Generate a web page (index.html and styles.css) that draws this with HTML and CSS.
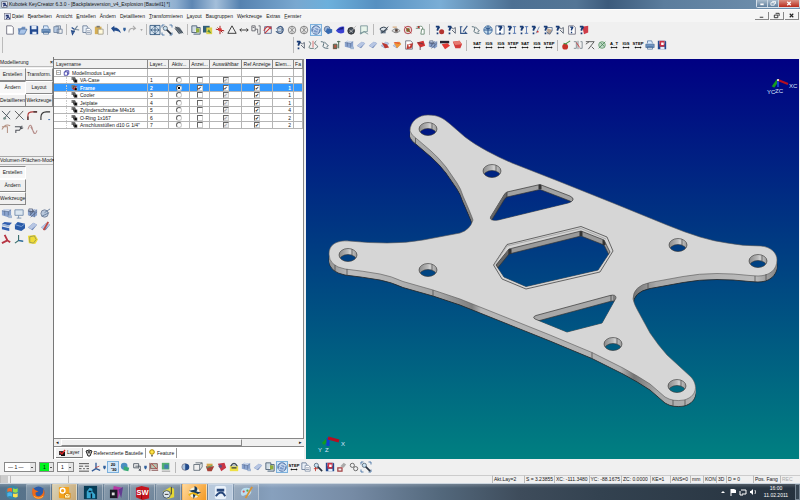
FILE: index.html
```html
<!DOCTYPE html>
<html lang="de">
<head>
<meta charset="utf-8">
<meta name="viewport" content="width=device-width, initial-scale=1">
<title>Kubotek KeyCreator 6.3.0</title>
<link rel="stylesheet" href="styles.css">
</head>
<body>
<header class="titlebar">
  <svg class="app-icon" viewBox="0 0 12 12"><rect x="1" y="1" width="10" height="10" rx="1" fill="#e8edf5" stroke="#445"/><path d="M3 3h5v3H3z" fill="#23346e"/><path d="M4 9l3-3 3 3" stroke="#23346e" fill="none" stroke-width="2"/></svg>
  <h1>Kubotek KeyCreator 6.3.0 - [Backplateversion_v4_Explosion [Bauteil1] *]</h1>
  <div class="window-buttons">
    <button aria-label="Minimieren"><svg viewBox="0 0 12 8"><path d="M4 5h4" stroke="#fff" stroke-width="2"/></svg></button>
    <button aria-label="Wiederherstellen"><svg viewBox="0 0 12 8"><path d="M5 1.500h4v3M3.500 3h4v3h-4z" stroke="#fff" fill="none"/></svg></button>
    <button class="close" aria-label="Schließen"><svg viewBox="0 0 12 8"><path d="M4 2l4 4M8 2l-4 4" stroke="#fff" stroke-width="1.500"/></svg></button>
  </div>
</header>

<nav class="menubar">
  <svg class="app-icon" viewBox="0 0 12 12"><rect x="1" y="1" width="10" height="10" fill="#dfe3f4" stroke="#667"/><path d="M3 3h5v3H3z" fill="#23346e"/><path d="M4 10l3-4 3 4" stroke="#23346e" fill="none" stroke-width="2"/></svg>
  <button><u>D</u>atei</button><button><u>B</u>earbeiten</button><button><u>A</u>nsicht</button><button><u>E</u>rstellen</button><button><u>Ä</u>ndern</button><button><u>D</u>etaillieren</button><button><u>T</u>ransformieren</button><button><u>L</u>ayout</button><button>Baugruppen</button><button><u>W</u>erkzeuge</button><button>E<u>x</u>tras</button><button><u>F</u>enster</button>
  <div class="mdi-buttons">
    <button aria-label="Fenster minimieren"><svg viewBox="0 0 12 8"><path d="M4 6h4" stroke="#222"/></svg></button>
    <button aria-label="Fenster wiederherstellen"><svg viewBox="0 0 12 8"><path d="M5 1.500h4v3M3.500 3.500h4v3h-4z" stroke="#222" fill="none"/></svg></button>
    <button aria-label="Fenster schließen"><svg viewBox="0 0 12 8"><path d="M4 2l4 4M8 2l-4 4" stroke="#222" stroke-width="1.300"/></svg></button>
  </div>
</nav>

<div class="toolbar main-tools" role="toolbar" data-icons="new open save printer printall | cut copy paste | undo drop redo dropgrey | fit zoomwin hatch | screen picture spark triangle width props nocircle rotate wheel wheel *shade sphere half darkball sheet || maskeye maskeye2 redeye redo2 || askdot askpath askangle squiggle globe askbox asklen asklen askline askpart askpath askpage askred"></div>
<div class="toolbar second-tools">
  <div class="toolbar empty-tools"></div>
  <div class="toolbar" role="toolbar" data-icons="askpath curves squiggle lamp cubes slab slab redslab goldslab redpage redblock gearcube redtop redbox || SAT IGS IGS STEP SAT IGS STEP | tomato mirror seven greenball A_T IGS STEP printer redsave"></div>
</div>

<main class="workspace">
  <aside class="palettes">
    <section class="palette first">
      <h2>Modellierung <button aria-label="Modellierung schließen">×</button></h2>
      <div class="palette-tabs"><button>Erstellen</button><button>Transform.</button><button class="active">Ändern</button><button>Layout</button><button>Detaillieren</button><button>Werkzeuge</button></div>
      <div class="palette-icons" data-icons="trimx trimx2 fillet fillet2 spline spline2 spline3"></div>
    </section>
    <section class="palette">
      <h2>Volumen-/Flächen-Mod<button aria-label="Volumen schließen">×</button></h2>
      <div class="palette-tabs"><button class="active">Erstellen</button><button class="row-two">Ändern</button><button class="row-two">Werkzeuge</button></div>
      <div class="palette-icons" data-icons="cubes monitor gearcube ballcube bluetop bluecube slab redpen redaxis axis yellowcube"></div>
    </section>
  </aside>

  <section class="layers">
    <div class="table-area">
      <table>
        <colgroup><col class="c-name"><col class="c-num"><col class="c-num"><col class="c-show"><col class="c-sel"><col class="c-ref"><col class="c-num"><col></colgroup>
        <thead><tr><th>Layername</th><th>Layer...</th><th>Aktiv...</th><th>Anzei...</th><th>Auswählbar</th><th>Ref Anzeige</th><th>Elem...</th><th>Fa</th></tr></thead>
        <tbody id="layer-rows">
          <tr class="root"><td><span class="expander">−</span><svg class="root-icon" viewBox="0 0 8 8"><path d="M1 2.500h4.500V7H1zM2.500 2.500V1H7v4.500H5.500" fill="none" stroke="#22229a"/></svg>Modellmodus Layer</td><td></td><td></td><td></td><td></td><td></td><td></td><td></td></tr>
        </tbody>
      </table>
    </div>
    <div class="hscroll"><button aria-label="Nach links">◂</button><span class="thumb"></span><button aria-label="Nach rechts">▸</button></div>
    <div class="layer-tabs">
      <button class="active"><svg viewBox="0 0 8 8"><path d="M1 2h4v4H1z" fill="#333"/><path d="M3 3h4v4H3z" fill="#111"/><path d="M2 3l2 2 3-4" stroke="#d22" fill="none" stroke-width="1.300"/></svg>Layer</button>
      <button><svg viewBox="0 0 8 8"><path d="M1 2q3-2 6 0L5 7H3z" fill="#ddd" stroke="#222"/><circle cx="4" cy="3" r="1.500" fill="#555"/></svg>Referenzierte Bauteile</button>
      <button><svg viewBox="0 0 8 8"><circle cx="4" cy="3" r="2.300" fill="#ffe34a" stroke="#a80"/><path d="M3 6h2v1.500H3z" fill="#777"/></svg>Feature</button>
    </div>
  </section>

  <section class="viewport">
    <svg viewBox="306 59 493 400" role="img" aria-label="Backplate">
      <defs>
        <linearGradient id="sky" gradientUnits="userSpaceOnUse" x1="0" y1="59" x2="0" y2="459"><stop offset="0" stop-color="#000083"/><stop offset="1" stop-color="#008081"/></linearGradient>
        <linearGradient id="wall" x1="0" x2="1" y1="0" y2="0"><stop offset="0" stop-color="#8a8a8a"/><stop offset=".5" stop-color="#bcbcbc"/><stop offset=".6" stop-color="#d0d0d0"/><stop offset="1" stop-color="#999"/></linearGradient>
        <linearGradient id="side" gradientUnits="userSpaceOnUse" x1="328" x2="778" y1="0" y2="0"><stop offset="0" stop-color="#929292"/><stop offset=".05" stop-color="#bdbdbd"/><stop offset=".17" stop-color="#b0b0b0"/><stop offset=".25" stop-color="#a4a4a4"/><stop offset=".32" stop-color="#808080"/><stop offset=".34" stop-color="#b6b6b6"/><stop offset=".65" stop-color="#b2b2b2"/><stop offset=".68" stop-color="#757575"/><stop offset=".73" stop-color="#a9a9a9"/><stop offset=".95" stop-color="#bcbcbc"/><stop offset="1" stop-color="#828282"/></linearGradient>
        <path id="body" d="M410 131C410 121 419 115 428 115C438 115 443 118 450 124L465 137Q474 144 487 151Q500 158 512 163L558 181L613 203L667 225Q684 232 700 237Q713 241 727 243Q742 246 761 246C771 247 777 253 777 260C777 270 769 276 758 276L750 275.500Q733 273.500 717 273.500Q699 273.500 683 276.500L650 282.500Q633 286 633 299Q634 304 638 311L650 333Q658 345 667 355L691 377C699 386 696 397 684 400Q673 402 665 397L650 384Q638 376 623 368L592 352.500L550 335L460 299L433 290L403 281.500Q391 276 380 274Q363 271 345 269Q329 266 329 254C329 245 336 240 349 241Q369 243 387 243Q407 243 423 240L460 233Q470 230 473 220Q471 214 463 196Q461 189 457 183L446 167Q439 158 431 151L417 139Q411 135 410 131Z"/>
        <path id="upper" d="M507 192L540 184.500L570 196Q574 198 573 200Q572 202 568 203L498 220Q489 221 490.500 217L504 195Q505 193 507 192Z"/>
        <path id="lower" d="M536 315.500L610 295.500Q616 294 616 298L602 323L567 332L535 319Q532 317 536 315.500Z"/>
        <path id="rim" d="M507 244.500L581 226.500L607 237L613 251L600 272L526 289L502 279L493.500 265Z"/>
        <path id="octagon" d="M509 249L581 231L604 240L610 252L598 270L526 286.500L504 277L496 265Z"/>
        <ellipse id="hole" rx="9" ry="6.500"/>
        <clipPath id="hole-clip"><use href="#hole"/></clipPath>
        <clipPath id="upper-clip"><use href="#upper"/></clipPath>
        <clipPath id="lower-clip"><use href="#lower"/></clipPath>
        <clipPath id="octagon-clip"><use href="#octagon"/></clipPath>
      </defs>
      <rect x="306" y="59" width="493" height="400" fill="url(#sky)"/>
      <g fill="url(#side)">
        <use href="#body" y="6" stroke="#222" stroke-width=".8"/>
        <use href="#body" y="5"/><use href="#body" y="4"/><use href="#body" y="3"/><use href="#body" y="2"/><use href="#body" y="1"/>
      </g>
      <use href="#body" fill="#d6d6d6" stroke="#555" stroke-width=".6"/>
      <path d="M415.500 138v6M335 265v6M347 269v6M433 290v6M592 352.500v6M648 283v6M755 276v6M766 274v6M673 400v6M685 400v6" stroke="#444" stroke-width=".7"/>
      <g stroke="#333" stroke-width=".7">
        <use href="#upper" fill="#a2a2a2"/><g clip-path="url(#upper-clip)"><path d="M488 218L507 190V200L492 222Z" fill="#666"/><use href="#upper" y="5" fill="url(#sky)"/><path d="M540 184v5" stroke-width="3"/></g>
        <use href="#lower" fill="#a8a8a8"/><g clip-path="url(#lower-clip)"><use href="#lower" y="6" fill="url(#sky)"/><path d="M611 295v6M614 296v5"/></g>
        <use href="#rim" fill="#d4d4d4"/><path d="M494 265L507 246L581 228.500L606 239" stroke="#999" fill="none"/><use href="#octagon" fill="#9a9a9a"/><g clip-path="url(#octagon-clip)"><path d="M496 265L509 248V255L499 269Z" fill="#666"/><use href="#octagon" y="5" fill="url(#sky)"/><path d="M510 249v5M581 231v5M604 240v5" stroke-width="3"/></g>
      </g>
      <g id="holes"></g>
      <g class="triad"><path d="M328 439l-5 5" stroke="#139b20" stroke-width="3"/><path d="M328 438v8" stroke="#123bd5" stroke-width="3"/><path d="M328 438l11 3" stroke="#b50f20" stroke-width="3"/><text x="341" y="446">X</text><text x="318" y="452">Y</text><text x="325" y="452">Z</text></g>
      <g class="triad"><path d="M778 80l-5 7" stroke="#139b20" stroke-width="3"/><path d="M778 80v7" stroke="#123bd5" stroke-width="2"/><path d="M778 80l10 4" stroke="#b50f20" stroke-width="2"/><circle cx="778" cy="80" r="1" fill="#fff"/><text x="789" y="88">XC</text><text x="767" y="94">YC</text><text x="775" y="93">ZC</text></g>
    </svg>
  </section>
</main>

<div class="toolbar bottom-tools" role="toolbar">
  <select class="pick line-pick" aria-label="Linienart"><option>— 1 —</option></select>
  <select class="pick color-pick" aria-label="Farbe"><option>1</option></select>
  <select class="pick" aria-label="Linienbreite"><option>1</option></select>
  <div class="toolbar" data-icons="lines axis2 drop *toggle greenglobe lamp2 drop redscreen greenpic || bluehalf box basket redball toolbox cubes slab screen *shade STEP copy zoomred redsave eraser rings zoomwin"></div>
</div>

<footer class="statusbar">
  <span class="s-tick"></span><span class="s-tick2"></span><span class="s-message"></span><span class="s-layer">Akt.Lay=2</span><span class="s-coord">S = 3.23855</span><span class="s-coord">XC: -111.3480</span><span class="s-coord">YC: -88.1675</span><span class="s-coord">ZC: 0.0000</span><span class="s-mid">KE=1</span><span class="s-mid">ANS=0</span><span class="s-unit">mm</span><span class="s-unit">KON</span><span class="s-dim">3D</span><span class="s-depth">D = 0</span><span class="s-depth">Pos. Fang</span><span class="s-mid off">REC</span>
</footer>

<div class="taskbar">
  <button class="start" aria-label="Start"><svg viewBox="0 0 16 16"><circle cx="8" cy="8" r="7.500" fill="#3b86a5"/><path d="M2.500 4q3-2 5-.5v4q-2-1.500-5 0z" fill="#f36b2b"/><path d="M8.500 3.500q3 1.500 5 0v4q-2 1.500-5 0z" fill="#9bdf45"/><path d="M2.500 8.500q3-1.500 5 0v4q-2-1.500-5 0z" fill="#49b4ed"/><path d="M8.500 9q3 1 5-.5v4q-2 1.500-5 0z" fill="#ffe04d"/></svg></button>
  <button aria-label="Firefox"><svg viewBox="0 0 16 16"><circle cx="8" cy="8" r="6.500" fill="#2b5ba8"/><path d="M2 3Q0 9 3 13Q8 17 13 13Q16 8 13 4Q14 10 9 12Q4 12 5 8L8 7Q4 6 2 3Z" fill="#ee6a18"/><path d="M3 12q5 4 10 0" stroke="#ffc248" fill="none"/></svg></button>
  <button class="mail" aria-label="Outlook"><svg viewBox="0 0 16 16"><rect x="2" y="2" width="11" height="12" rx="1" fill="#f2a21e"/><circle cx="6" cy="6" r="2.500" stroke="#fff" stroke-width="1.500" fill="none"/><path d="M8 9h6v5H8z" fill="#fff2bd" stroke="#d98b12"/><path d="M8 9l3 3 3-3" stroke="#d98b12" fill="none"/></svg></button>
  <button aria-label="Bildbetrachter"><svg viewBox="0 0 16 16"><rect x="1" y="1" width="14" height="14" fill="#063c56"/><path d="M4 14V7l3-4 3 1v3l3 3v4z" fill="#38a7d0"/><path d="M6 7h3M9 9v5" stroke="#041b30" stroke-width="1.500"/></svg></button>
  <button aria-label="Medien"><svg viewBox="0 0 16 16"><path d="M5 1l9 2-5 12-5-7z" fill="#b637a3"/><path d="M10 5l5-3-2 12z" fill="#613c91"/><rect x="1" y="5" width="8" height="9" fill="#1b1b24"/><path d="M3 8h3v3H3z" fill="#ddd"/></svg></button>
  <button aria-label="SolidWorks"><svg viewBox="0 0 16 16"><path d="M1 3l6-2 8 2v11l-7 2-7-3z" fill="#c5151f"/><path d="M7 5v10" stroke="#7c0710"/><text class="badge" x="8" y="11">SW</text></svg></button>
  <button class="running" aria-label="Rechner"><svg viewBox="0 0 16 16"><path d="M2 7l8-5 4 2v9l-7 2z" fill="#e6d834"/><circle cx="6" cy="10" r="4" fill="#dfe7ec" stroke="#456"/><path d="M4 10h4M11 2v8" stroke="#333"/></svg></button>
  <button class="alert" aria-label="Nachricht"><svg viewBox="0 0 16 16"><circle cx="8" cy="8" r="5.500" fill="#f4f0dd"/><path d="M8 1q5 2 2 6l5 1-6 3-2 4-1-7-4-2 6-1z" fill="#183c5c"/><path d="M2 11q4-5 11 1" stroke="#e9b516" stroke-width="2" fill="none"/></svg></button>
  <button class="running current" aria-label="KeyCreator"><svg viewBox="0 0 16 16"><rect x="2" y="1" width="12" height="14" rx="2" fill="#e9f1fa"/><path d="M4 4h8v3H4z" fill="#27477b"/><path d="M3 12q6-8 10 0" fill="none" stroke="#27477b" stroke-width="2"/></svg></button>
  <button class="running" aria-label="Paint"><svg viewBox="0 0 16 16"><path d="M2 8Q2 3 8 3Q14 3 13 8Q11 12 8 12Q9 9 6 11Q2 13 2 8Z" fill="#b9ddf0"/><circle cx="5" cy="7" r="1.200" fill="#df514b"/><circle cx="9" cy="6" r="1.200" fill="#55a84a"/><path d="M14 2L7 14" stroke="#d79335" stroke-width="2"/></svg></button>
  <div class="tray">
    <svg viewBox="0 0 8 8"><path d="M2 5l2-2 2 2z" fill="#fff"/></svg>
    <svg viewBox="0 0 8 8"><path d="M2 1v7" stroke="#fff"/><path d="M2 1h3l2 1v3H2z" fill="#fff"/></svg>
    <svg viewBox="0 0 8 8"><path d="M2 2h5v4H3M1 3v4h3" fill="none" stroke="#fff"/></svg>
    <svg viewBox="0 0 8 8"><path d="M1 3h1l2-2v6L2 5H1z" fill="#fff"/><path d="M6 2q1 2 0 4" stroke="#ddd" fill="none"/></svg>
    <div class="clock"><time>16:00</time><span>11.02.2011</span></div>
    <button class="desktop" aria-label="Desktop anzeigen"></button>
  </div>
</div>
<script src="script.js"></script>
</body>
</html>
```
FILE: styles.css
```css
* { box-sizing: border-box; }
body {
  margin: 0;
  min-height: 100vh;
  display: flex;
  flex-direction: column;
  background: #f0f0f0;
  color: #161616;
  font: 5px/7px "Liberation Sans", Arial, sans-serif;
}
button { margin: 0; padding: 0; border: 0; background: none; color: inherit; font: inherit; }
h1, h2 { margin: 0; font: inherit; }
svg { display: block; flex: none; }

.titlebar {
  display: flex;
  align-items: center;
  height: 9px;
  padding-left: 1px;
  background: linear-gradient(90deg, #b9c7d6 0, #c3d0df 18%, #8fafd0 22%, #5d86b3 24%, #a4bfda 27%, #5682b0 30%, #79a8d0 37%, #6cb0dc 41%, #5790c1 47%, #7aaed6 55%, #4d7093 64%, #547696 72%, #3c5b7c 76%, #5b7d9d 83%, #7393b0 100%);
}
.app-icon { width: 7px; height: 7px; }
.titlebar h1 { margin-left: 1px; flex: 1; white-space: nowrap; }
.window-buttons { display: flex; align-self: flex-start; width: 44px; height: 8px; border: 1px solid #d5e0ea; border-top: 0; border-radius: 0 0 2px 2px; }
.window-buttons button { flex: 1; background: linear-gradient(#a9bccd, #607f9d); border-right: 1px solid #c9d6e1; }
.window-buttons .close { flex: 2; border: 0; background: linear-gradient(#d99184, #b92c1d); }
.window-buttons svg { width: 100%; height: 7px; }

.menubar { display: flex; align-items: center; gap: 4px; height: 13px; padding: 0 1px 0 4px; border-top: 1px solid #fff; background: #f5f5f5; }
.menubar .app-icon { margin-right: -3px; }
.menubar u { text-underline-offset: 0; text-decoration-thickness: 1px; text-decoration-color: #999; }
.mdi-buttons { display: flex; gap: 1px; margin-left: auto; }
.mdi-buttons button { width: 14px; height: 8px; border: solid; border-width: 0 1px 1px 0; border-color: #888; }
.mdi-buttons svg { width: 100%; height: 7px; }

.toolbar { display: flex; align-items: center; }
.toolbar button { width: 12px; height: 12px; flex: none; display: grid; place-items: center; }
.toolbar button.selected { border: 1px solid #7cb1dd; background: #d2e6f8; }
.toolbar button svg { width: 10px; height: 10px; overflow: visible; }
.toolbar button.narrow { width: 5px; }
.toolbar button.narrow svg { width: 5px; height: 5px; }
.toolbar .separator { width: 1px; height: 11px; margin: 0 2px; background: #b8b8b8; }
.toolbar .separator.wide { margin: 0 4px 0 3px; }
.main-tools { height: 15px; padding-left: 4px; }
.second-tools { height: 20px; align-items: stretch; }
.second-tools > .toolbar { height: 16px; padding-left: 1px; border-left: 1px solid #bbb; }
.second-tools > .empty-tools { flex: none; width: 291px; margin: 0 0 0 2px; }

svg text { font-family: "Liberation Sans", Arial, sans-serif; }
.word { font-size: 5px; font-weight: bold; text-anchor: middle; }
.badge { font-size: 8px; font-weight: bold; text-anchor: middle; fill: #fff; }

.workspace { flex: 1; display: grid; grid-template-columns: 54px 252px 1fr; min-height: 0; border-right: 1px solid #f0f0f0; }
.palettes { border-right: 1px solid #777; padding-top: 2px; }
.palette.first { min-height: 98px; border-bottom: 1px solid #aaa; }
.palette h2 { display: flex; justify-content: space-between; height: 8px; margin-bottom: 1px; white-space: nowrap; border-bottom: 1px solid #bbb; }
.palette h2 button { font-weight: bold; }
.palette-tabs { display: grid; grid-template-columns: 26px 27px; grid-auto-rows: 13px; }
.palette-tabs button { border: solid; border-width: 1px 1px 1px 0; border-color: #fff #888 #888 #fff; }
.palette-tabs .active { border-color: #888 #fff #fff #888; background: #f8f8f8; }
.palette-tabs .row-two { grid-column: 1; }
.palette-icons { display: grid; grid-template-columns: repeat(4, 13px); grid-auto-rows: 13px; margin-top: 2px; }
.palette-icons button { display: grid; place-items: center; }
.palette-icons svg { width: 11px; height: 11px; }

.layers { display: flex; flex-direction: column; padding-top: 2px; min-width: 0; background: #f0f0f0; }
.table-area { flex: 1; margin-right: 2px; overflow: hidden; background: #fff; border: 1px solid #888; border-left: 0; }
table { width: 100%; table-layout: fixed; border-collapse: separate; border-spacing: 0; }
.c-name { width: 94px; }
.c-num { width: 21px; }
.c-show { width: 20px; }
.c-sel { width: 32px; }
.c-ref { width: 31px; }
th, td { padding: 0; overflow: hidden; white-space: nowrap; text-align: center; vertical-align: middle; }
th { height: 9px; font-weight: normal; background: #f0f0f0; border-right: 1px solid #888; border-bottom: 1px solid #888; }
th:first-child { text-align: left; padding-left: 2px; }
td { height: 8px; line-height: 6px; border-right: 1px solid #b5b5b5; border-bottom: 1px solid #b5b5b5; }
tr:nth-child(even) td { height: 7px; }
td:nth-child(2), td:first-child { text-align: left; }
td:nth-child(2) { padding-left: 2px; }
td:nth-child(7) { text-align: right; padding-right: 2px; }
.active-layer td { color: #fff; font-weight: bold; background: #3399ff; }
td input { appearance: none; display: block; width: 6px; height: 6px; margin: 0 auto; border: 1px solid; border-color: #666 #ccc #ccc #666; background: #fff; color: #111; }
td input[type="radio"] { border-radius: 3px; }
td input:disabled { color: #999; background: #eee; }
.active-layer input:disabled { color: #333; background: #fff; }
input[type="checkbox"]:checked::after { content: "✔"; display: block; width: 4px; height: 4px; font: 5px/4px "DejaVu Sans", sans-serif; }
input[type="radio"]:checked::after { content: ""; display: block; width: 2px; height: 2px; margin: 1px; background: #000; }
.expander { display: inline-grid; place-items: center; width: 5px; height: 5px; margin: 0 2px; border: 1px solid #aaa; line-height: 3px; vertical-align: top; }
.root-icon, .layer-icon { display: inline-block; width: 7px; height: 6px; margin-right: 2px; vertical-align: top; }
.branch { display: inline-block; width: 5px; height: 6px; margin-left: 12px; border-left: 1px dotted #ccc; vertical-align: top; }

.hscroll { display: flex; height: 7px; margin-right: 2px; background: #f0f0f0; }
.hscroll button { width: 7px; line-height: 5px; }
.hscroll .thumb { width: 181px; margin-right: auto; border: 1px solid; border-color: #fff #888 #888 #fff; }
.layer-tabs { display: flex; height: 13px; padding: 1px 0 1px 2px; margin-right: 2px; background: #fff; border-top: 1px solid #888; }
.layer-tabs button { display: flex; align-items: center; gap: 1px; padding: 0 2px; border-right: 1px solid #999; }
.layer-tabs .active { border-bottom: 1px solid #777; background: #f0f0f0; }
.layer-tabs svg { width: 8px; height: 8px; }

.viewport { margin-top: 2px; min-width: 0; background: linear-gradient(#000083, #008081); }
.viewport > svg { width: 100%; height: 100%; }
.triad text { fill: #dce6ff; font-size: 6px; }

.bottom-tools { height: 16px; padding-left: 4px; }
.bottom-tools > .toolbar { margin-left: 1px; }
.pick { width: 17px; height: 10px; margin: 0 3px 0 0; padding: 0 5px 0 3px; border: 1px solid #888; border-radius: 0; appearance: none; color: #111; font: inherit; background: linear-gradient(#555, #555) right 2px center / 2px 1px no-repeat, linear-gradient(#e5e5e5, #e5e5e5) right / 5px 100% no-repeat, #fff; }
.line-pick { width: 32px; }
.color-pick { width: 15px; background: linear-gradient(#555, #555) right 1px center / 2px 1px no-repeat, linear-gradient(#e5e5e5, #e5e5e5) right / 4px 100% no-repeat, #00f51d; }

.statusbar { display: flex; height: 9px; border-bottom: 1px solid #cbd5de; line-height: 7px; white-space: nowrap; }
.statusbar span { flex: none; height: 8px; padding-left: 1px; border-left: 1px solid #bbb; border-top: 1px solid #ccc; }
.statusbar .s-tick { width: 10px; background: linear-gradient(90deg, #ccc 7px, #f0f0f0 7px); }
.statusbar .s-tick2 { width: 58px; }
.statusbar .s-message { flex: 1; }
.statusbar .s-layer { width: 32px; }
.statusbar .s-coord { min-width: 29px; padding-right: 1px; }
.statusbar .s-mid { width: 20px; }
.statusbar .s-unit { width: 13px; }
.statusbar .s-dim { width: 10px; }
.statusbar .s-depth { width: 27px; }
.statusbar .off { color: #aaa; }

.taskbar { display: flex; height: 16px; background: linear-gradient(#ffffff30, #ffffff00 4px), linear-gradient(90deg, #557189 0, #6b8197 25%, #87a0bd 34%, #768ba5 44%, #53687c 55%, #3e4c5b 65%, #334250 75%, #26323e 100%); }
.taskbar > button { width: 25px; margin-right: 1px; display: grid; place-items: center; border: 1px solid #ffffff40; border-bottom: 0; background: linear-gradient(120deg, #ffffff40, #ffffff10); }
.taskbar > button svg { width: 15px; height: 15px; }
.taskbar > .start { border-color: transparent; background: none; }
.taskbar > .mail { background: linear-gradient(120deg, #d9d3b9, #c8a976); }
.taskbar > .alert { background: linear-gradient(120deg, #ffd89a, #f49a24); }
.taskbar > .current { background: #b8c9dc; }
.tray { margin-left: auto; display: flex; align-items: center; gap: 2px; color: #fff; }
.tray svg { width: 8px; height: 8px; }
.clock { display: grid; width: 34px; text-align: center; }
.tray .desktop { width: 5px; height: 16px; border: 1px solid #788693; background: #364451; }
```
FILE: script.js
```js
const P = (d, stroke = "#222", width = 1, fill = "none") =>
  `<path d="${d}" stroke="${stroke}" stroke-width="${width}" fill="${fill}"/>`;
const F = (d, fill) => `<path d="${d}" fill="${fill}"/>`;
const C = (x, y, r, fill, stroke = "none") =>
  `<circle cx="${x}" cy="${y}" r="${r}" fill="${fill}" stroke="${stroke}"/>`;
const ask = F("M1 1h4l1 2-2 3v1H2V5l1-2H1zM2 9h2v2H2z", "#173a75");
const cube = F("M1 3l3-2 7 1v6l-3 2-7-2z", "#8ba4cf") + F("M1 3l3-2 7 1-3 2z", "#d0dcf0") + P("M8 4v6M1 3l7 1 3-2M4 3v5", "#52698f", .7);
const slab = F("M1 7l6-5 4 2-5 6z", "#6c85b5") + F("M1 7l6-5 4 2-6 5z", "#b7c6e3");
const lens = P("M5 5l6 6", "#2a3442", 2) + `<circle cx="4" cy="4" r="2.500" fill="#c9e1f1" stroke="#567"/>`;
const page = P("M2 1h6l2 2v8H2z", "#667", 1, "#fff");
const floppy = F("M1 1h9l1 1v9H1z", "#224a91") + F("M3 1h6v4H3zM4 8h5v3H4z", "#e5edf8");

const icons = {
  new: page,
  open: F("M1 4h4l1-2h4v3H4l-2 6z", "#7190be") + F("M2 11l2-6h8l-3 6z", "#a9c4e8") + P("M2 11l2-6h8l-3 6z", "#3e669d", .8),
  save: floppy,
  printer: F("M3 1h5l1 4H3z", "#dcecff") + F("M1 5h10v4H1z", "#7195c1") + P("M3 4V1h5l1 3M1 5h10v4H1zM3 8h6v3H3z", "#446a98", .8),
  printall: F("M1 2h6v7H1z", "#b8cbe3") + P("M1 2h6v7H1zM5 5h6v5H5zM3 1h6v4", "#637894", .9),
  cut: P("M9 1L4 8M5 5l6 1", "#6c8298", 1.3) + P("M2 7l3 1-2 3zM5 5L2 3", "#234a89", 1.5),
  copy: P("M1 1h5l1 2v6H1z", "#657894", 1, "#e9f0f8") + P("M5 4h4l2 2v5H5zM6 7h4M6 9h4", "#657894", .8, "#fff"),
  paste: F("M1 2h8v9H1z", "#d5ae54") + F("M3 1h4v2H3z", "#777") + P("M5 5h6v6H5z", "#8b8879", .8, "#fff9db"),
  undo: F("M0 4l4-3v2q6 0 8 7Q9 6 4 7v2z", "#214b8c"),
  redo: P("M1 9Q1 3 8 4M6 1l3 3-3 2", "#aaa", 1.3),
  drop: F("M3 2h6v5l-3 4-3-4z", "#315f9b"),
  dropgrey: F("M3 5h6l-3 5z", "#aaa"),
  fit: F("M0 0h12v12H0z", "#d6e3ef") + P("M0 .5h12v11H0zM6 1v10M1 6h10M4 3l2-2 2 2M4 9l2 2 2-2M3 4L1 6l2 2M9 4l2 2-2 2", "#2d5278"),
  zoomwin: P("M0 3V0h3M9 0h3v3M0 9v3h3M12 9v3H9", "#3b6ba0", 1) + lens,
  zoomred: lens + P("M1 8h5M3 6v5", "#bd3027"),
  hatch: F("M1 2l6 1 4 6-5 2-4-6z", "#75808c") + P("M2 2l7 8M4 2l7 8M1 4l5 6", "#27333e", .8),
  screen: P("M1 1h6v8H1zM3 11h8V3H7", "#44586f", 1, "#d2dde5") + F("M6 4h4v5H6z", "#90ad39"),
  picture: F("M0 1h8v8H0z", "#315f78") + F("M4 3h7v8H4z", "#ddd14a") + F("M5 8l2-3 3 5z", "#4f8b42"),
  spark: P("M1 5l10 2M6 1v10M3 3l6 6", "#a92323", 1.2) + F("M4 4h4v3H4z", "#d33"),
  triangle: P("M6 1l5 9H1z"),
  width: P("M1 6h10M3 4L1 6l2 2M9 4l2 2-2 2"),
  props: P("M1 1h4v6H1zM2 3h2M5 5h3v5M9 1h2v10H8", "#4b4d55", .9),
  nocircle: P("M2 2h8v8H2z", "#536792") + P("M2 10L10 2M1 7q4-9 9-2", "#c6373c", 1.3),
  rotate: P("M2 5q5-7 8 0l-3 1M10 6q-2 7-8 2l3-1", "#405c85", 1.5) + P("M3 4h5v4H3z", "#789", 1, "#bed0ec"),
  wheel: `<circle cx="6" cy="6" r="4.500" fill="#e5e5e5" stroke="#777"/>` + P("M3 3l6 6M9 3L3 9M6 1v10", "#777", .7),
  shade: C(6, 6, 5, "#7898c8", "#395b92") + P("M2 5q4-6 8 0M2 9l3-6 5 1-2 6zM4 5l4 2", "#dbe7f8", 1),
  sphere: C(5, 5, 3.5, "#9fb6d8", "#5a7195") + F("M5 4l6 1v4l-5 2-3-3z", "#376ab0"),
  half: F("M1 7q4-6 10-5v7q-6 3-10-2z", "#3b42d2") + F("M2 6l8-4v3z", "#171e79"),
  darkball: C(5, 7, 4, "#47515d", "#222") + P("M7 5l4-4M3 6l4 3M3 9l5-4", "#bbb", 1),
  sheet: P("M2 1h8v7H6l-4 3zM1 10l5-2 5 3", "#67858b", .9, "#e7f4ea"),
  maskeye: F("M2 3h6v7H2z", "#667789") + P("M1 5q5-5 9 0-5 5-9 0M3 10L11 2", "#354351", 1.2, "#dce3e9"),
  maskeye2: C(6, 7, 3, "#777") + P("M1 7q5-5 10 0-5 4-10 0", "#888", 1, "#ddd") + F("M5 5h3v3H5z", "#4c3b35") + F("M2 2h5v1H2z", "#cb8c4d"),
  redeye: C(6, 6, 4.5, "#ead8d8", "#aa3037") + C(6, 6, 2.3, "#773") + P("M2 2l8 8", "#b42b32"),
  redo2: P("M2 2h4M1 4h5M8 5h3v6H7zM4 2q6-2 5 3", "#60836b", 1, "#fff") + F("M4 1l2 2-3 1z", "#b22"),
  askdot: ask + C(8, 8, 3, "#b33431"),
  askpath: ask + P("M5 3q3 3 5 0M6 6l4 4M10 3v7", "#4c5666", 1),
  askangle: P("M1 2h3M2 2v8h7l-2-2M5 8l5-7", "#345486", 1.3),
  squiggle: P("M1 2q5 0 3 4t6 4M5 2l5 5-2 1", "#4d6671", 1.1),
  globe: C(6, 6, 5, "#c5dced", "#37659a") + P("M6 1v10M1 6h10M3 3q3 3 6 0", "#345d91", 1.3),
  askbox: P("M1 1h10v10H1z", "#536c91", 1, "#fff") + `<g transform="translate(3 0)">${ask}</g>`,
  asklen: ask + P("M7 2h4M9 2v8M7 10h4", "#446aaa"),
  askline: ask + P("M6 10l4-8", "#6882aa") + F("M7 7h2v2H7z", "#c33"),
  askpart: ask + F("M5 4l6 2-2 5H5z", "#b8a392") + P("M5 3h6v4l-3 4-4-3", "#536c91"),
  askpage: page + `<g transform="translate(3 1) scale(.8)">${ask}</g>`,
  askred: F("M4 2l7-1v8l-5 2z", "#ce3c49") + ask,
  curves: P("M1 2q4 1 1 5t5 3M10 1q-4 3 0 5t-2 5", "#597071", 1) + P("M6 1v8", "#c33", .8),
  lamp: F("M1 5h5v6H1z", "#ba5743") + P("M2 5h4v5H2zM6 2h4M8 1v9", "#506b5a", 1.2),
  cubes: cube + F("M8 8h4v3H8z", "#a2b7d3"),
  slab,
  redslab: slab + F("M2 3l6 2 3 4-5 1z", "#bd3730"),
  goldslab: slab + F("M2 3l7-1 2 3-5 5z", "#ef9636") + P("M3 3l6 1", "#d33"),
  redpage: page + F("M4 5l7-1-2 6-6 1z", "#bd3a34") + F("M5 5l3 1-2 3z", "#fff"),
  redblock: F("M1 3l8-2 2 6-6 2z", "#d23131") + P("M2 3l7 2M5 8v4", "#5c3846"),
  gearcube: cube + P("M2 1h4v3H2zM4 5l4-3M3 8l5-5M4 10l7-6", "#535d75", .8),
  redtop: F("M0 1h11v3H0z", "#292531") + F("M2 5l7-1 3 3-6 4z", "#e23833"),
  redbox: F("M1 2l8-1 3 4-2 5H4z", "#d33b3b") + F("M1 2l8-1 3 4-8 1z", "#e67b71"),
  tomato: C(5, 8, 3.5, "#c73128") + P("M5 5l6-4M3 4l4 1", "#47914a", 1.3),
  mirror: P("M1 2h3v8H1M9 2h2v8H8M6 1v10", "#758188") + P("M4 3l4 6", "#c33"),
  seven: P("M1 2h10L4 11M1 5l4-3M8 8l3 3", "#444"),
  greenball: C(6, 6, 4, "#c1d7c8", "#659a6f") + P("M2 10L10 2M4 3l5 5", "#468956"),
  redsave: floppy + F("M3 1h6v7H3z", "#cc3345") + F("M5 3h3v3H5z", "#fff"),
  trimx: P("M1 1l9 9M10 1L3 10", "#46515b", 1) + C(4, 9, 1.5, "#78918c"),
  trimx2: P("M1 1l9 9M10 1L2 10", "#555", 1) + F("M10 10h1v1h-1z", "#36a"),
  fillet: P("M1 11V6q0-4 5-4h5", "#b23a3a", 1.2) + P("M1 11V7M7 2h4", "#333", 1.2),
  fillet2: P("M1 11V8q0-6 6-6h4", "#333", 1.2) + F("M9 10h2v1H9z", "#36a"),
  spline: P("M1 4h6v7M1 7q4-7 9-4", "#b49182", 1.1),
  spline2: P("M1 4h6q-1 4 3 1M2 11V8h4l3-5", "#4d5158", 1.1),
  spline3: P("M1 7q3-9 5 0t5 1M4 4l4 7", "#b48b87", 1.1),
  monitor: P("M1 2h9v6H1zM5 8v3M3 11h5", "#7992b0", 1, "#dbe6f0"),
  ballcube: C(5, 6, 4, "#b9c8dc", "#738199") + P("M5 5l6-4M2 9l8-4", "#68809f"),
  bluetop: F("M1 3l3-2 8 1-3 3zM1 6l8 2v3L1 9z", "#315fb0") + F("M1 3l8 2v2L1 5z", "#9bb4d8"),
  bluecube: F("M1 4l3-3 8 2v5l-4 3-7-2z", "#285aa8") + P("M1 4l7 2 4-3", "#82a5d8"),
  redpen: slab + P("M9 1L4 10", "#bf4942", 2),
  redaxis: P("M4 1l3 6 3 2M7 7l-6 3", "#b73543", 2),
  axis: P("M5 1v6l-4 3M5 7l5 1", "#386c6b", 1.2) + P("M5 7l5 1", "#26a", 1.2),
  axis2: P("M6 1v7L1 11M6 8l5 2", "#345c98", 1.6) + P("M5 7l5-2", "#bb4a45"),
  yellowcube: F("M1 2l8-1 3 5-3 5-7-1z", "#f0dc36") + P("M3 3l5-1 2 4-3 4-4-1z", "#77815b", .7),
  lines: P("M0 2h12M0 5h5M7 5h5M0 8h3M5 8h2M9 8h3M0 11h12", "#333"),
  toggle: `<text class="word" x="6" y="5">20</text><text class="word" x="7" y="11">'30</text>`,
  greenglobe: C(5, 5, 4, "#4b8ec0") + F("M5 5l6 2-1 4-6-1z", "#38aa75"),
  lamp2: P("M2 2h6v5H2zM4 5h6v5H8M8 8l3 3", "#454f5a", 1),
  redscreen: P("M1 1v10M2 2h8v6H2zM3 10h8", "#7e4646", 1, "#b7c7b4") + P("M3 2l7 7", "#c33"),
  greenpic: F("M1 1h9v8H1z", "#50af70") + F("M4 3h5v5H4z", "#437fb0") + P("M1 11h10", "#888"),
  bluehalf: C(5, 6, 4, "#a9c2df", "#778") + F("M5 2q5 0 5 4t-5 4z", "#244c8c"),
  box: P("M1 3h7v7H1zM3 1h8l-3 2M8 10l3-4V1", "#5a6671"),
  basket: F("M1 5h10l-3 6H3z", "#a54238") + F("M2 2h7v3H2z", "#d7a74c") + P("M2 7l7-3", "#4a6"),
  redball: F("M1 2l8-1 2 6-6 4z", "#c83544") + C(4, 5, 2, "#634c7e"),
  toolbox: F("M1 5h10v6H1z", "#eee044") + P("M2 5q4-7 8 0M3 7h6", "#303b45", 1.4, "#b9c2c8"),
  eraser: F("M4 5l4-4 3 2-3 4z", "#aaa") + P("M1 7h5v4H1z", "#a34043", 1.5),
  rings: `<circle cx="4" cy="4" r="2.500" fill="none" stroke="#555"/><circle cx="8" cy="8" r="2.500" fill="none" stroke="#555"/>`
};

function drawing(name) {
  if (icons[name]) return icons[name];
  return `<text class="word" x="6" y="6">${name}</text>` + P("M2 9h8M3 8v2M9 8v2", "#111", 1);
}

document.querySelectorAll("[data-icons]").forEach(bar => {
  bar.innerHTML = bar.dataset.icons.split(" ").map(item => {
    if (item === "|") return '<span class="separator"></span>';
    if (item === "||") return '<span class="separator wide"></span>';
    const name = item.replace("*", "");
    const cls = item[0] === "*" ? "selected" : name.startsWith("drop") ? "narrow" : "plain";
    return `<button class="${cls}" aria-label="${name}"><svg viewBox="0 0 12 12">${drawing(name)}</svg></button>`;
  }).join("");
});

const layers = [["VA-Case", 1], ["Frame", 1], ["Cooler", 1], ["Jetplate", 1],
  ["Zylinderschraube M4x16", 4], ["O-Ring 1x167", 2], ["Anschlusstüllen d10 G 1/4\"", 2]];
document.getElementById("layer-rows").insertAdjacentHTML("beforeend", layers.map(([name, count], i) => {
  const on = i === 1;
  const mark = on ? P("M1 4l2 2 4-5", "#d22", 1.3) : "";
  return `<tr class="${on ? "active-layer" : "layer"}"><td><span class="branch"></span><svg class="layer-icon" viewBox="0 0 8 8">${F("M0 0h5v4H0z", "#777")}${F("M2 2h4v4H2z", "#444")}${P("M3.500 3.500h4v4h-4z", on ? "#fff" : "#999", .6, "#000")}${mark}</svg>${name}</td><td>${i + 1}</td>
    <td><input type="radio" name="active" aria-label="${name} aktiv" ${on ? "checked" : ""}></td>
    <td><input type="checkbox" aria-label="${name} anzeigen" ${on ? "checked" : ""}></td>
    <td><input type="checkbox" aria-label="${name} auswählbar" checked disabled></td>
    <td><input type="checkbox" aria-label="${name} Ref Anzeige" checked></td><td>${count}</td><td></td></tr>`;
}).join(""));

const holes = [[428, 129], [492, 171], [348, 255], [428, 270], [678, 245], [758, 261], [613, 344], [677, 386]];
document.getElementById("holes").innerHTML = holes.map(([x, y]) =>
  `<g transform="translate(${x} ${y})"><use href="#hole" fill="url(#wall)"/><g clip-path="url(#hole-clip)"><g transform="translate(${-x} ${-y})"><ellipse cx="${x}" cy="${y + 6}" rx="9" ry="6.500" fill="url(#sky)" stroke="#333" stroke-width=".6"/></g><path d="M4-7v7" stroke="#333" stroke-width=".6"/></g><use href="#hole" fill="none" stroke="#333" stroke-width=".6"/></g>`).join("");
```
